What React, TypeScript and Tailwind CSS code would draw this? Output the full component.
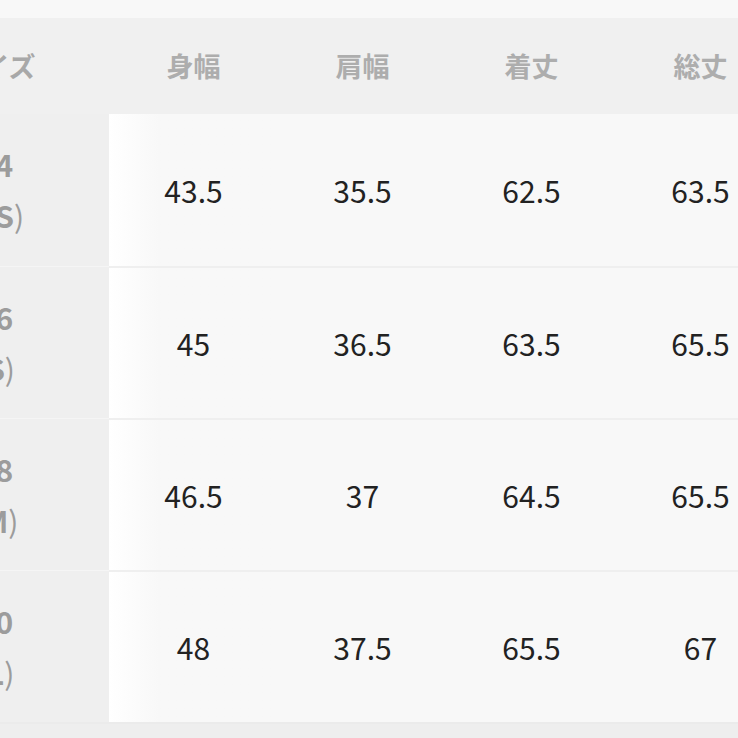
const headers = ["身幅", "肩幅", "着丈", "総丈"];

const rows = [
  { size: "34", label: "XS", values: ["43.5", "35.5", "62.5", "63.5"] },
  { size: "36", label: "S", values: ["45", "36.5", "63.5", "65.5"] },
  { size: "38", label: "M", values: ["46.5", "37", "64.5", "65.5"] },
  { size: "40", label: "L", values: ["48", "37.5", "65.5", "67"] },
];

export default function App() {
  return (
    <div
      className="h-[738px] w-[738px] overflow-hidden bg-[#f8f8f8]"
      style={{ fontFamily: '"Noto Sans CJK JP", "Noto Sans", sans-serif' }}
    >
      <div className="h-[18px]" />
      <div className="ml-[-118px] w-[903px]">
        {/* header */}
        <div className="grid h-[96px] grid-cols-[227px_repeat(4,169px)] bg-[#f0f0f0]">
          <div className="flex items-center justify-center text-[27px] font-bold text-[#a8a8a8]">
            サイズ
          </div>
          {headers.map((h) => (
            <div
              key={h}
              className="flex items-center justify-center text-[27px] font-bold text-[#adadad]"
            >
              {h}
            </div>
          ))}
        </div>

        {/* body */}
        {rows.map((r, i) => (
          <div
            key={r.size}
            className="grid h-[152px] grid-cols-[227px_repeat(4,169px)]"
          >
            <div
              className={`flex flex-col items-center justify-center bg-[#efefef] text-[30px] leading-[51px] text-[#9c9c9c] ${
                i > 0 ? "border-t border-[#f5f5f5]" : ""
              }`}
            >
              <span className="font-semibold">{r.size}</span>
              <span>
                <span className="font-normal">(</span>
                <span className="font-semibold">{r.label}</span>
                <span className="font-normal">)</span>
              </span>
            </div>
            {r.values.map((v, j) => (
              <div
                key={j}
                className={`flex items-center justify-center text-[30px] text-[#222] ${
                  j === 0
                    ? "bg-linear-to-r from-white to-[#f8f8f8] to-30%"
                    : "bg-[#f8f8f8]"
                } ${i > 0 ? "border-t-2 border-[#efefef]" : ""}`}
              >
                {v}
              </div>
            ))}
          </div>
        ))}
      </div>
      <div className="h-[16px] border-t-2 border-[#ebebeb] bg-[#eeeeee]" />
    </div>
  );
}
